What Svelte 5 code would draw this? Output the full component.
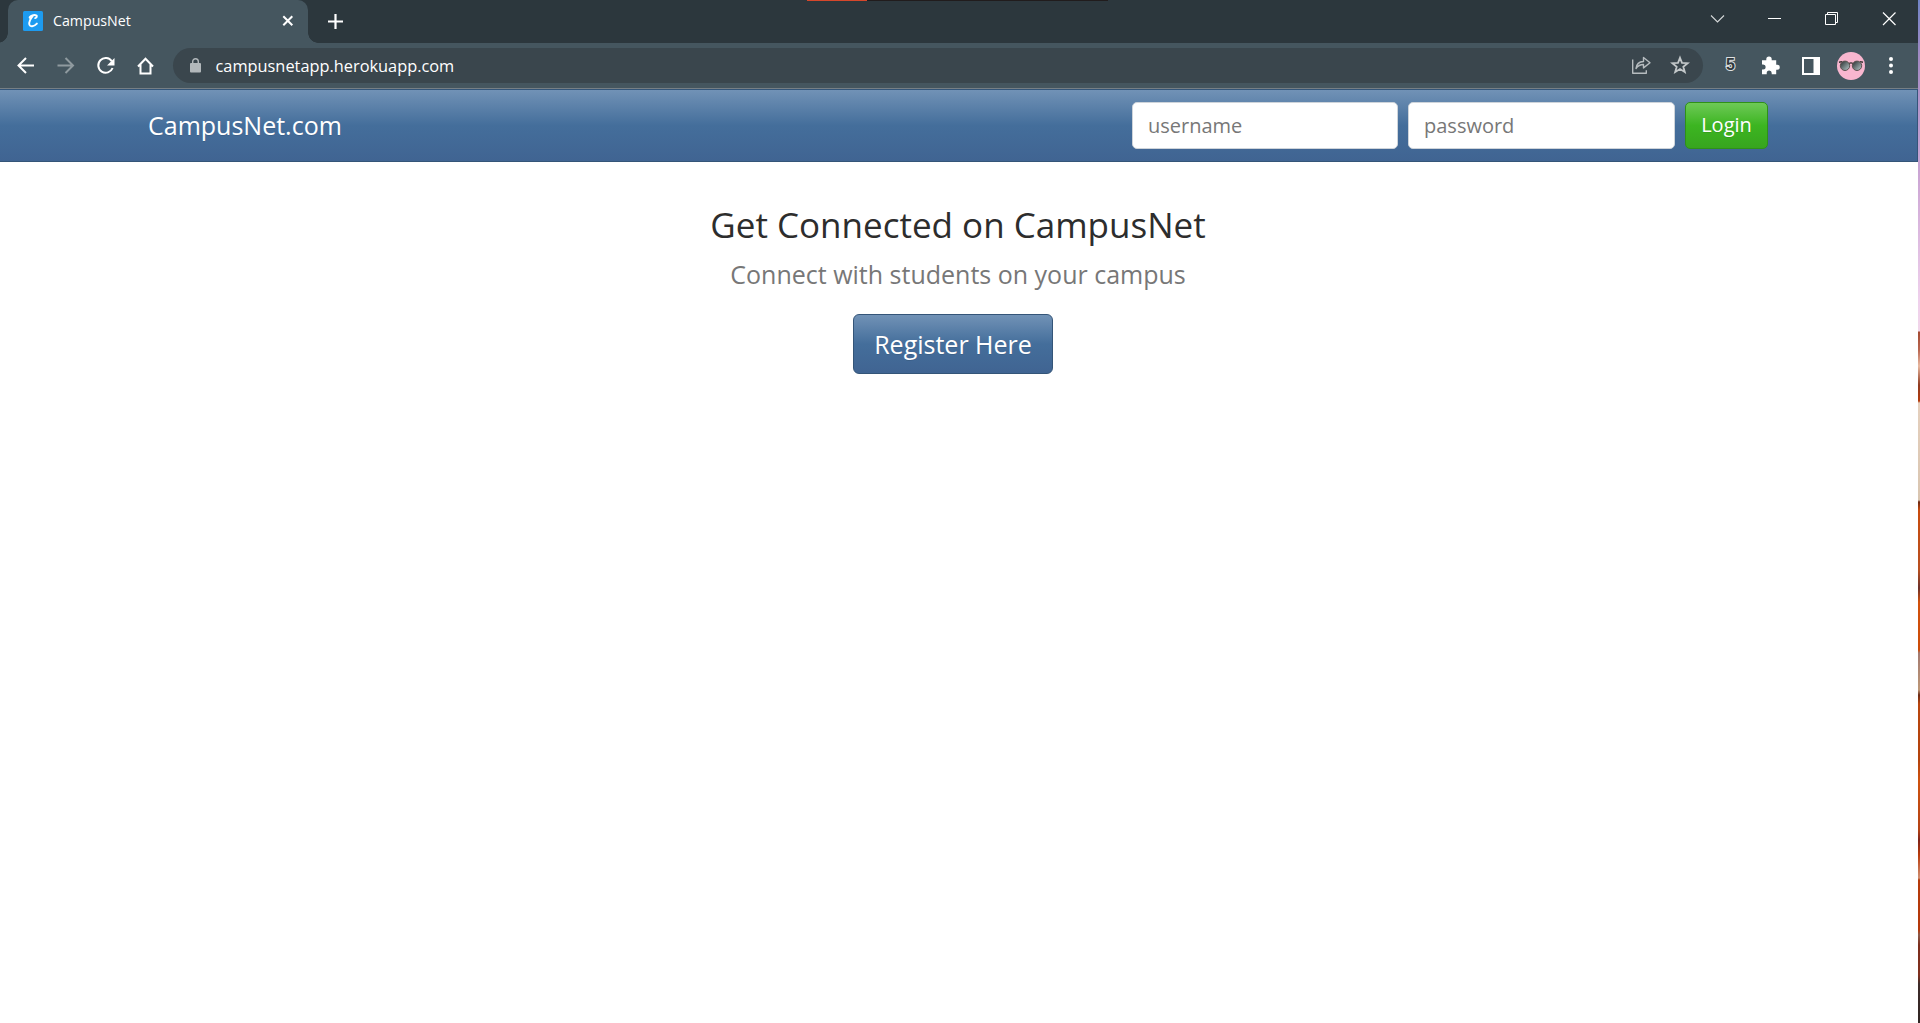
<script>
  let username = $state('');
  let password = $state('');
</script>

<div class="screen">
  <div class="window">
    <header class="tabstrip">
      <div class="topmark"><i></i></div>
      <div class="tab">
        <svg class="favicon" width="20" height="20" viewBox="0 0 20 20">
          <rect width="20" height="20" rx="1.5" fill="#1d9bf0" />
          <path d="M13.6 4.6c-2.6-1.5-6.3.3-6.9 1.5-.3.8.6 1.300 1.200.7M13.700 4.600c.4 1.400-.3 2.400-1.500 2.500M10.200 4.500C7.700 7 5.600 11.400 6.400 13.800c.8 2.300 4.300 2 7.500-1.200" fill="none" stroke="#fff" stroke-width="1.900" stroke-linecap="round" />
        </svg>
        <span class="tabtitle">CampusNet</span>
        <svg width="12" height="12" viewBox="0 0 12 12"><path d="M1.300 1.300l9 9M10.300 1.300l-9 9" stroke="#fff" stroke-width="2" /></svg>
      </div>
      <svg class="plus" width="16" height="16" viewBox="0 0 16 16"><path d="M7.500 0v15M0 7.500h15" stroke="#fff" stroke-width="2.200" /></svg>
      <div class="controls">
        <svg width="58" height="38" viewBox="0 0 58 38"><path d="M23 15.500l6.500 6.500 6.500-6.500" fill="none" stroke="#d5d8d9" stroke-width="1.100" /></svg>
        <svg width="57" height="38" viewBox="0 0 57 38"><path d="M22 18.500h13" stroke="#fff" /></svg>
        <svg width="57" height="38" viewBox="0 0 57 38"><path d="M22.500 14.500h10v10h-10zM24.500 14.500v-2h10v10h-2" fill="none" stroke="#fff" /></svg>
        <svg width="57" height="38" viewBox="0 0 57 38"><path d="M23 12.500l12.500 12.500M35.500 12.500L23 25" stroke="#fff" stroke-width="1.200" /></svg>
      </div>
    </header>

    <div class="toolbar">
      <svg width="40" height="44" viewBox="0 0 40 44"><path d="M34 21.500H19M26 14l-7.500 7.500L26 29" fill="none" stroke="#fff" stroke-width="2" /></svg>
      <svg width="40" height="44" viewBox="0 0 40 44"><path d="M17.500 21.500h15M25.500 14l7.500 7.500-7.500 7.500" fill="none" stroke="#8f9a9f" stroke-width="2" /></svg>
      <svg width="40" height="44" viewBox="0 0 40 44"><path d="M31.800 17.200A7.400 7.400 0 1 0 32.600 24" fill="none" stroke="#fff" stroke-width="2" /><path d="M34.500 14v7.500H27z" fill="#fff" /></svg>
      <svg width="53" height="44" viewBox="0 0 53 44"><path d="M18 22.500l7.500-7.700 7.500 7.700M20.500 20.500v8.900h10v-8.900" fill="none" stroke="#fff" stroke-width="2" /></svg>
      <div class="omnibox">
        <svg width="11" height="15" viewBox="0 0 11 15"><rect y="5" width="11" height="9.500" rx="1" fill="#b2b8bb" /><path d="M2.700 6V3.500a2.800 2.800 0 0 1 5.600 0V6" fill="none" stroke="#b2b8bb" stroke-width="1.400" /></svg>
        <span class="url">campusnetapp.herokuapp.com</span>
        <svg class="share" width="20" height="20" viewBox="0 0 20 20"><path d="M1.700 4.500v13.800h13.600v-3M5 13.500c.5-4.500 3-6.800 7.500-7V2.500l6.500 5.200-6.500 5.200V9.500c-3.500 0-5.500 1-7.500 4z" fill="none" stroke="#b6bcbf" stroke-width="1.400" stroke-linejoin="round" /></svg>
        <svg width="20" height="20" viewBox="0 0 20 20"><path d="M10 2.800l2 5.100 5.600.3-4.300 3.500 1.500 5.300-4.800-3-4.800 3 1.500-5.300L2.400 8.200l5.600-.3z" fill="none" stroke="#c2c7c9" stroke-width="1.800" /></svg>
      </div>
      <span class="five">5</span>
      <svg class="puzzle" width="19" height="19" viewBox="0 0 19 19"><path d="M5.300 4.200V3.200a2.700 2.700 0 0 1 5.400 0v1h4.500v4.500h1.100a2.500 2.500 0 0 1 0 5h-1.100v4.500h-4.500v-1.100a2.500 2.500 0 0 0-5 0v1.100H1v-4.600h1.200a2.500 2.500 0 0 0 0-5H1V4.200z" fill="#fff" /></svg>
      <svg class="panel" width="18" height="18" viewBox="0 0 18 18"><rect x="1" y="1" width="16" height="16" fill="none" stroke="#fff" stroke-width="2" /><rect x="11.500" width="6.500" height="18" fill="#fff" /></svg>
      <svg class="avatar" width="28" height="28" viewBox="0 0 28 28">
        <defs><linearGradient id="lens" x1="0" y1="0" x2="1" y2="1"><stop offset="0.100" stop-color="#343b3d" /><stop offset="1" stop-color="#b9cccd" /></linearGradient></defs>
        <circle cx="14" cy="14" r="14" fill="#f8b6cf" />
        <path d="M2 10.200l3-.6M26 10.200l-3-.6M12 11.500q2-1.200 4 0" fill="none" stroke="#34302e" stroke-width="1.400" />
        <circle cx="8" cy="13.800" r="4.700" fill="url(#lens)" stroke="#5c5250" /><circle cx="20" cy="13.800" r="4.700" fill="url(#lens)" stroke="#5c5250" />
      </svg>
      <svg class="dots" width="4" height="17" viewBox="0 0 4 17"><g fill="#fff"><circle cx="2" cy="2" r="2" /><circle cx="2" cy="8.500" r="2" /><circle cx="2" cy="15" r="2" /></g></svg>
    </div>

    <nav class="navbar">
      <span class="brand">CampusNet.com</span>
      <form class="login">
        <input class="user" placeholder="username" bind:value={username} />
        <input type="password" placeholder="password" bind:value={password} />
        <button type="button" class="btn success">Login</button>
      </form>
    </nav>

    <main>
      <h1>Get Connected on CampusNet</h1>
      <p>Connect with students on your campus</p>
      <button type="button" class="btn primary">Register Here</button>
    </main>
  </div>
  <aside class="wallpaper"></aside>
</div>

<style>
  :global(body) { overflow: hidden; }
  .screen { display: flex; width: 1920px; height: 1023px; font-family: 'Open Sans', sans-serif; background: #fff; }
  .screen *, .screen { box-sizing: border-box; }
  svg { display: block; flex: none; }
  .window { width: 1918px; display: flex; flex-direction: column; }
  .wallpaper {
    width: 2px;
    background: linear-gradient(#7184c6 0, #a58bc4 60px, #cda7d5 180px, #efd0ec 300px, #f1d5e9 331px, #a44b32 332px, #b96650 350px, #e8b8a0 366px, #8f3a20 385px, #b43b0c 401px, #e5d0be 403px, #d9c5b0 500px, #6b2712 502px, #c94b0d 510px, #b84f20 570px, #6a302a 588px, #d2510c 602px, #cc4b08 650px, #a37a70 653px, #bd9777 690px, #6a2a14 695px, #b9460e 704px, #b3420c 760px, #cf520e 780px, #b44215 830px, #7e2319 840px, #b93a0b 855px, #cf8f72 878px, #b53a0a 880px, #b4380a 930px, #8b5b4b 935px, #7b2c1b 945px, #80301e 975px, #3e2b29 984px, #302523 100%);
  }
  .tabstrip { position: relative; height: 43px; flex: none; display: flex; align-items: flex-start; background: #2c373d; }
  .topmark { position: absolute; left: 807px; top: 0; width: 301px; height: 1px; background: #211c1d; }
  .topmark i { display: block; width: 60px; height: 1px; background: #d6472b; }
  .tab { position: relative; display: flex; align-items: center; width: 300px; height: 43px; margin-left: 8px; padding: 0 14px 1px 15px; background: #45565f; border-radius: 10px 10px 0 0; }
  .tab::before, .tab::after { content: ''; position: absolute; bottom: 0; width: 10px; height: 10px; }
  .tab::before { left: -10px; background: radial-gradient(circle at 0 0, transparent 9.500px, #45565f 10px); }
  .tab::after { right: -10px; background: radial-gradient(circle at 100% 0, transparent 9.500px, #45565f 10px); }
  .tabtitle { flex: 1; margin-left: 10px; font-size: 14.200px; color: #fff; line-height: 20px; }
  .plus { margin: 14px 0 0 20px; }
  .controls { display: flex; margin-left: auto; margin-right: 1px; }
  .toolbar { height: 46px; flex: none; display: flex; align-items: center; background: #45565f; border-bottom: 1px solid #767f85; }
  .toolbar > svg { flex: none; }
  .omnibox { width: 1530px; height: 35px; display: flex; align-items: center; margin-bottom: 1px; padding: 0 13px 0 17px; background: #3a464d; border-radius: 18px; }
  .url { flex: 1; margin-left: 14.500px; padding-top: 2px; color: #fff; font-size: 16.350px; line-height: 24px; }
  .share { margin-right: 19.500px; }
  .five { width: 12px; margin-left: 21.500px; margin-bottom: 2px; text-align: center; font: 700 16px/16px 'Liberation Sans', sans-serif; color: #30383c; -webkit-text-stroke: 2px #dfe1e2; paint-order: stroke fill; }
  .puzzle { margin-left: 24.500px; }
  .panel { margin-left: 22px; }
  .avatar { margin-left: 17px; }
  .dots { margin-left: 24px; }
  .navbar { height: 73px; flex: none; display: flex; align-items: center; padding: 0 149px 0 148px; border: 1px solid #345578; border-left: 0; background: linear-gradient(#7192b6, #446e9b 50%, #406492); }
  .brand { padding-bottom: 2px; font-size: 25px; line-height: 36px; color: #fff; text-shadow: 0 1px 0 rgba(0, 0, 0, 0.1); }
  .login { display: flex; gap: 10px; margin-left: auto; }
  input { width: 267px; height: 47px; padding: 0 15px; border: 1px solid #ced4da; border-radius: 5px; background: #fff; font: 20px 'Open Sans', sans-serif; color: #444; outline: 0; }
  .user { width: 266px; }
  input::placeholder { color: #777; opacity: 1; }
  .btn { padding: 0; color: #fff; font-family: 'Open Sans', sans-serif; text-shadow: 0 1px 0 rgba(0, 0, 0, 0.1); }
  .success { width: 83px; height: 47px; padding-bottom: 2px; font-size: 20px; border: 1px solid #2f9118; border-radius: 5px; background: linear-gradient(#6ec957, #3cb521 50%, #37a51e); }
  main { display: flex; flex-direction: column; align-items: center; padding: 39px 2px 0 0; }
  h1 { margin: 0; font-size: 35px; line-height: 48px; font-weight: 400; color: #2d2d2d; white-space: nowrap; }
  p { margin: 6px 0 0; font-size: 25px; line-height: 38px; color: #777; white-space: nowrap; }
  .primary { width: 200px; height: 60px; margin: 21px 10px 0 0; padding-bottom: 1px; font-size: 25px; border: 1px solid #345578; border-radius: 6px; background: linear-gradient(#7192b6, #446e9b 50%, #406492); }
</style>
